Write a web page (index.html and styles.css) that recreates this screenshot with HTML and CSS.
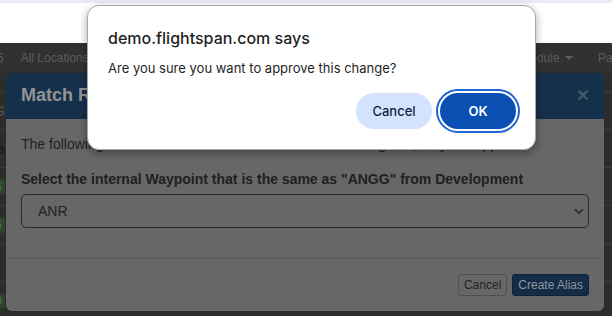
FILE: index.html
```html
<!DOCTYPE html>
<html lang="en">
  <head>
    <meta charset="UTF-8" />
    <title>Match Record</title>
    <link rel="stylesheet" href="styles.css">
  </head>
  <body>
    <div class="tabstrip"></div>
    <div class="topbar"></div>

    <nav class="navbar">
      <span class="nav-item nav-count">5</span>
      <span class="nav-sep"></span>
      <span class="nav-item">All Locations</span>
      <div class="nav-right">
        <span class="nav-item">Schedule <span class="caret"></span></span>
        <span class="nav-item">Pages</span>
      </div>
    </nav>

    <div class="list">
      <div class="row row-first"></div>
      <div class="row"><span class="cell cell-head">NG</span></div>
      <div class="row"><span class="cell cell-bold">Ma</span></div>
      <div class="row"><span class="cell"><span class="tag">16</span></span></div>
      <div class="row"><span class="cell"><span class="tag">26</span></span></div>
      <div class="row"></div>
      <div class="row"><span class="cell cell-wide"><span class="tag">10</span></span></div>
    </div>

    <div class="modal">
      <div class="modal-header">
        <h4 class="modal-title">Match Record</h4>
        <span class="close">&times;</span>
      </div>
      <div class="modal-body">
        <p>The following item is new and it needs to match an existing one, so you'll approve.</p>
        <div class="form-group">
          <label>Select the internal Waypoint that is the same as "ANGG" from Development</label>
          <div class="select">
            <span>ANR</span>
            <svg width="10" height="7" viewBox="0 0 10 7">
              <path d="M1 1.2l4 4 4-4" fill="none" stroke="#262626" stroke-width="1.6" />
            </svg>
          </div>
        </div>
      </div>
      <div class="modal-footer">
        <button class="btn btn-default">Cancel</button>
        <button class="btn btn-primary">Create Alias</button>
      </div>
    </div>

    <div class="dialog">
      <div class="dialog-title">demo.flightspan.com says</div>
      <div class="dialog-text">Are you sure you want to approve this change?</div>
      <div class="dialog-buttons">
        <button class="dlg-btn dlg-cancel">Cancel</button>
        <button class="dlg-btn dlg-ok">OK</button>
      </div>
    </div>
  </body>
</html>
```

FILE: styles.css
```css
:root {
  --page-dark: #2c2c2c;
  --nav-dark: #313131;
  --modal-gray: #676767;
  --modal-navy: #15304b;
  --line: #3a3a3a;
  --pill-blue: #d3e3fd;
  --ok-blue: #0b4fb3;
  --ring-blue: #1d66d2;
}

html,
body {
  margin: 0;
  padding: 0;
}

body {
  position: relative;
  width: 612px;
  height: 316px;
  overflow: hidden;
  background-color: var(--page-dark);
  font-family: "Liberation Sans", Arial, sans-serif;
  font-size: 14px;
}

.tabstrip {
  height: 3px;
  background-color: #e8ebf2;
}

.topbar {
  height: 40px;
  background-color: #fff;
}

/* navbar behind the modal */
.navbar {
  display: flex;
  align-items: center;
  width: 640px;
  height: 29px;
  padding-right: 8px;
  box-sizing: border-box;
  background-color: var(--nav-dark);
  color: #5a5d61;
  font-size: 12px;
}

.nav-count {
  margin-left: -3px;
}

.nav-sep {
  width: 1px;
  height: 20px;
  margin: 0 7px 0 9px;
  background-color: #1f3449;
}

.nav-right {
  display: flex;
  gap: 25px;
  margin-left: auto;
}

.caret {
  display: inline-block;
  width: 0;
  height: 0;
  margin-left: 2px;
  vertical-align: middle;
  border-top: 4px solid #5a5d61;
  border-left: 4px solid transparent;
  border-right: 4px solid transparent;
}

.row {
  display: flex;
  align-items: center;
  height: 37px;
  border-bottom: 1px solid var(--line);
}

.row-first {
  height: 19px;
}

.cell {
  display: flex;
  justify-content: flex-end;
  width: 5px;
  overflow: hidden;
  white-space: nowrap;
  color: #1d1d1d;
}

.cell-head {
  color: #555;
}

.cell-bold {
  font-weight: 700;
}

.tag {
  padding: 1px 3px;
  border-radius: 3px;
  background-color: #2c432c;
  color: #4a744a;
  font-size: 12px;
}

/* bootstrap-ish modal, dimmed */
.modal {
  position: absolute;
  left: 6px;
  top: 73px;
  width: 598px;
  border-radius: 6px;
  overflow: hidden;
  background-color: var(--modal-gray);
  color: #1f1f1f;
}

.modal-header {
  display: flex;
  align-items: center;
  justify-content: space-between;
  height: 46px;
  box-sizing: border-box;
  padding: 0 15px 2px;
  background-color: var(--modal-navy);
}

.modal-title {
  margin: 0;
  font-size: 18px;
  line-height: 20px;
  font-weight: 700;
  color: #939393;
}

.close {
  font-size: 21px;
  font-weight: 700;
  line-height: 20px;
  color: #46576a;
}

.modal-body {
  padding: 15px;
}

.modal-body p {
  margin: 0 0 15px;
  line-height: 20px;
}

.form-group {
  margin-bottom: 15px;
}

.form-group label {
  display: block;
  margin-bottom: 5px;
  font-weight: 700;
  line-height: 20px;
}

.select {
  display: flex;
  align-items: center;
  justify-content: space-between;
  height: 32px;
  padding: 0 4px 0 16px;
  border: 1px solid #1a3319;
  border-radius: 5px;
  color: #222;
}

.modal-footer {
  display: flex;
  justify-content: flex-end;
  gap: 5px;
  padding: 15px;
  border-top: 1px solid #5b5b5b;
}

.btn {
  height: 22px;
  padding: 1px 5px;
  border-radius: 3px;
  font-family: "Liberation Sans", Arial, sans-serif;
  font-size: 12px;
  line-height: 1.5;
}

.btn-default {
  background-color: var(--modal-gray);
  border: 1px solid #4f4f4f;
  color: #242424;
}

.btn-primary {
  background-color: #142c45;
  border: 1px solid #0f2236;
  color: #8a96a2;
}

/* browser alert */
.dialog {
  position: absolute;
  left: 87px;
  top: 5px;
  width: 449px;
  height: 145px;
  box-sizing: border-box;
  padding: 22px 19px 0 20px;
  border: 1px solid #a9a9a9;
  border-radius: 12px;
  background-color: #fff;
  box-shadow: 0 3px 8px rgba(0, 0, 0, 0.35);
  font-family: "Inter", "Noto Sans", sans-serif;
  color: #1f1f1f;
}

.dialog-title {
  font-size: 16px;
  line-height: 20px;
  font-weight: 500;
}

.dialog-text {
  margin-top: 11px;
  font-size: 13px;
  line-height: 18px;
}

.dialog-buttons {
  display: flex;
  justify-content: flex-end;
  gap: 8px;
  margin-top: 16px;
}

.dlg-btn {
  width: 76px;
  height: 36px;
  border: none;
  border-radius: 18px;
  font-family: "Inter", "Noto Sans", sans-serif;
  font-size: 13px;
  font-weight: 500;
}

.dlg-cancel {
  background-color: var(--pill-blue);
  color: #0b1f45;
}

.dlg-ok {
  background-color: var(--ok-blue);
  color: #fff;
  font-weight: 600;
  outline: 2px solid var(--ring-blue);
  outline-offset: 2px;
}
```
